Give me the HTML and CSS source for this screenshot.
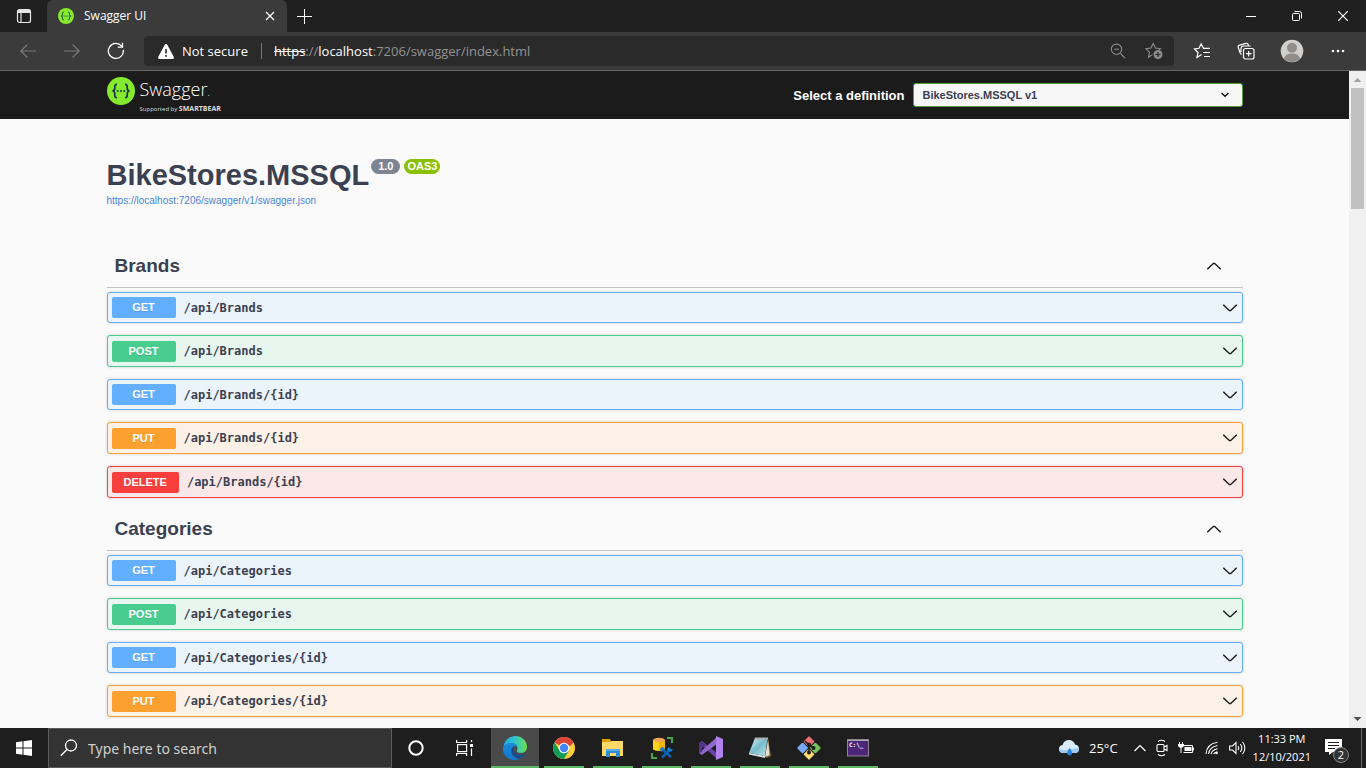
FILE: index.html
```html
<!DOCTYPE html>
<html lang="en">
<head>
<meta charset="utf-8">
<title>Swagger UI</title>
<link rel="stylesheet" href="styles.css">
</head>
<body>
<svg class="defs" aria-hidden="true">
  <symbol id="down" viewBox="0 0 14 8"><path d="M.3 .8L6.300 6.400Q7 7 7.700 6.400L13.700 .8" fill="none" stroke="#1c1c1c" stroke-width="1.400"/></symbol>
  <symbol id="up" viewBox="0 0 14 8"><path d="M.3 7.200L6.300 1.600Q7 1 7.700 1.600L13.700 7.200" fill="none" stroke="#1c1c1c" stroke-width="1.400"/></symbol>
  <symbol id="swagger" viewBox="0 0 28 28">
    <circle cx="14" cy="14" r="14" fill="#85ea2d"/>
    <path d="M10 7.4C7.600 7.400 7.800 9 7.800 11C7.800 13 7.400 14 5.400 14C7.400 14 7.800 15 7.800 17C7.800 19.200 7.600 20.700 10 20.700M18 7.400C20.400 7.400 20.200 9 20.200 11C20.200 13 20.600 14 22.600 14C20.600 14 20.200 15 20.200 17C20.200 19.200 20.400 20.700 18 20.700" fill="none" stroke="#173647" stroke-width="1.700"/>
    <g fill="#173647"><circle cx="10.700" cy="14" r="1"/><circle cx="14" cy="14" r="1"/><circle cx="17.300" cy="14" r="1"/></g>
  </symbol>
</svg>

<header class="tabstrip">
  <button class="tab-actions" aria-label="Tab actions"><svg width="16" height="16" fill="none" stroke="#e6e6e6" stroke-width="1.2"><rect x="1.500" y="1.500" width="13" height="13" rx="2"/><path d="M1.500 4.500h13M5 4.500v10" /><path d="M2 3h12" stroke-width="2"/></svg></button>
  <div class="tab">
    <svg width="16" height="16"><use href="#swagger"/></svg>
    <span class="tab-title">Swagger UI</span>
    <button class="tab-close" aria-label="Close tab"><svg width="10" height="10" stroke="#fff" stroke-width="1.300"><path d="M1 1l8 8M9 1l-8 8"/></svg></button>
  </div>
  <button class="tab-new" aria-label="New tab"><svg width="15" height="15" stroke="#fff"><path d="M0 7.500h15M7.500 0v15"/></svg></button>
  <div class="window-buttons">
    <button aria-label="Minimize"><svg width="10" height="10" stroke="#fff"><path d="M0 5.500h10"/></svg></button>
    <button aria-label="Restore"><svg width="10" height="10" fill="none" stroke="#fff"><rect x=".5" y="2.500" width="7" height="7" rx="1"/><path d="M2.500 .5h5a2 2 0 0 1 2 2v5"/></svg></button>
    <button aria-label="Close"><svg width="10" height="10" stroke="#fff" stroke-width="1.200"><path d="M0 0l10 10M10 0L0 10"/></svg></button>
  </div>
</header>

<nav class="toolbar" aria-label="Browser">
  <button aria-label="Back"><svg width="16" height="14" fill="none" stroke="#7b7b7b" stroke-width="1.100"><path d="M16 7H.8M7.500 .5L.8 7l6.700 6.500"/></svg></button>
  <button aria-label="Forward"><svg width="16" height="14" fill="none" stroke="#7b7b7b" stroke-width="1.100"><path d="M0 7h15.200M8.500 .5L15.200 7l-6.700 6.500"/></svg></button>
  <button aria-label="Refresh"><svg width="18" height="18" fill="none" stroke="#fff" stroke-width="1.300"><path d="M16.300 7.800A7.500 7.500 0 1 1 14.700 4.200M15.500 .8v4.400h-4.700"/></svg></button>
  <div class="omnibox">
    <button class="security"><svg width="16" height="15"><path d="M8 0Q8.900 0 9.300 .8L15.800 13Q16.300 15 14.500 15H1.500Q-.3 15 .2 13L6.700 .8Q7.100 0 8 0Z" fill="#fff"/><path d="M8 5v4.500M8 11v1.800" stroke="#2a2a2a" stroke-width="1.600"/></svg><span>Not secure</span></button>
    <div class="address" role="textbox" aria-label="Address"><s>https</s>://<b>localhost</b>:7206/swagger/index.html</div>
    <button aria-label="Zoom"><svg width="16" height="16" fill="none" stroke="#8c8c8c" stroke-width="1.100"><circle cx="6.500" cy="6.300" r="5.200"/><path d="M4 6.300h5M10.300 10.300l4.700 4.700"/></svg></button>
    <button aria-label="Add to favorites"><svg width="18" height="18" fill="none" stroke="#8c8c8c" stroke-width="1.100"><path d="M7.500 12.600L3.500 15.200L4.500 10.300L1 6.700L5.900 6.100L8.200 1.500L10.400 6.100L15.500 6.700L13.500 8.700"/><circle cx="13" cy="12.500" r="4.500" fill="#8c8c8c" stroke="none"/><path d="M13 10v5M10.500 12.500h5" stroke="#2a2a2a" stroke-width="1.200"/></svg></button>
  </div>
  <button aria-label="Favorites"><svg width="18" height="18" fill="none" stroke="#fff" stroke-width="1.200"><path d="M8.500 12.500L4 15.500L5 10.500L1.500 6.900L6 6.300L8.200 1.800L10.400 6.300H17M10 10.500h7M11 14.500h6"/></svg></button>
  <button aria-label="Collections"><svg width="18" height="18" fill="none" stroke="#fff" stroke-width="1.200"><rect x="6.500" y="6.500" width="10.500" height="10.500" rx="2"/><path d="M11.700 9v5.500M9 11.700h5.500M4.500 12.500Q3.200 11.500 2.800 10L1.200 5.200Q.8 4 2 3.300L9 1.300Q10.500 1 11 2.300L11.500 4M4 10V7Q4 4 7 4H13.500"/></svg></button>
  <button class="profile" aria-label="Profile"><svg width="24" height="24"><circle cx="12" cy="12" r="11.300" fill="#d2d0ce"/><circle cx="12" cy="8.800" r="5" fill="#918d8a"/><path d="M4 19.800Q5 14.500 12 14.500T20 19.800Q12 26.500 4 19.800Z" fill="#918d8a"/></svg></button>
  <button aria-label="Settings and more"><svg width="14" height="4" fill="#fff"><circle cx="2" cy="2" r="1.300"/><circle cx="7" cy="2" r="1.300"/><circle cx="12" cy="2" r="1.300"/></svg></button>
</nav>

<div class="viewport">
  <main class="page">
    <div class="topbar">
      <div class="wrapper topbar-row">
        <a class="logo" href="#">
          <svg width="28" height="28"><use href="#swagger"/></svg>
          <span class="logo-words"><span class="logo-name">Swagger<small>.</small></span><span class="logo-by">Supported by <strong>SMARTBEAR</strong></span></span>
        </a>
        <label class="select-label" for="definition">Select a definition</label>
        <div class="select-box">
          <select id="definition"><option>BikeStores.MSSQL v1</option></select>
          <svg width="10" height="6" fill="none" stroke="#111" stroke-width="1.500"><path d="M1.500 1l3.500 3.200l3.500-3.200"/></svg>
        </div>
      </div>
    </div>
    <div class="wrapper">
      <section class="info">
        <div class="title-row"><h1>BikeStores.MSSQL</h1><span class="badge">1.0</span><span class="badge oas">OAS3</span></div>
        <a class="spec" href="#">https://localhost:7206/swagger/v1/swagger.json</a>
      </section>
      <section class="group">
        <button class="group-head"><span>Brands</span><svg width="14" height="8"><use href="#up"/></svg></button>
        <button class="op get"><span class="verb">GET</span><span class="path">/api/Brands</span><svg width="14" height="8"><use href="#down"/></svg></button>
        <button class="op post"><span class="verb">POST</span><span class="path">/api/Brands</span><svg width="14" height="8"><use href="#down"/></svg></button>
        <button class="op get"><span class="verb">GET</span><span class="path">/api/Brands/{id}</span><svg width="14" height="8"><use href="#down"/></svg></button>
        <button class="op put"><span class="verb">PUT</span><span class="path">/api/Brands/{id}</span><svg width="14" height="8"><use href="#down"/></svg></button>
        <button class="op delete"><span class="verb">DELETE</span><span class="path">/api/Brands/{id}</span><svg width="14" height="8"><use href="#down"/></svg></button>
      </section>
      <section class="group">
        <button class="group-head"><span>Categories</span><svg width="14" height="8"><use href="#up"/></svg></button>
        <button class="op get"><span class="verb">GET</span><span class="path">/api/Categories</span><svg width="14" height="8"><use href="#down"/></svg></button>
        <button class="op post"><span class="verb">POST</span><span class="path">/api/Categories</span><svg width="14" height="8"><use href="#down"/></svg></button>
        <button class="op get"><span class="verb">GET</span><span class="path">/api/Categories/{id}</span><svg width="14" height="8"><use href="#down"/></svg></button>
        <button class="op put"><span class="verb">PUT</span><span class="path">/api/Categories/{id}</span><svg width="14" height="8"><use href="#down"/></svg></button>
      </section>
    </div>
  </main>
  <div class="scrollbar" aria-hidden="true">
    <svg width="17" height="17"><path d="M4.500 11L8.500 7l4 4z" fill="#a3a3a3"/></svg>
    <div class="thumb"></div>
    <svg class="scroll-end" width="17" height="17"><path d="M4.500 6L8.500 10l4-4z" fill="#505050"/></svg>
  </div>
</div>

<footer class="taskbar">
  <button aria-label="Start"><svg width="16" height="16" fill="#fff"><path d="M0 2.200L6.500 1.300V7.500H0zM7.500 1.200L16 0V7.500H7.500zM0 8.500H6.500V14.700L0 13.800zM7.500 8.500H16V16L7.500 14.800z"/></svg></button>
  <label class="search"><svg width="18" height="18" fill="none" stroke="#fff" stroke-width="1.300"><circle cx="11" cy="6.500" r="5.500"/><path d="M7 10.500L.8 16.700"/></svg><input type="text" placeholder="Type here to search" aria-label="Search"></label>
  <button aria-label="Cortana"><svg width="16" height="16"><circle cx="8" cy="8" r="6.700" fill="none" stroke="#fff" stroke-width="2"/></svg></button>
  <button aria-label="Task view"><svg width="17" height="16" fill="none" stroke="#fff" stroke-width="1.200"><path d="M.6 0v2.500h10V0M.6 16v-2.500h10V16M15.500 0v2M15.500 8.500V16"/><rect x="1.600" y="4.600" width="9" height="7"/><path d="M14 4h3v3h-3z" fill="#fff" stroke="none"/></svg></button>
  <div class="apps">
    <button class="app active" aria-label="Edge"><svg width="24" height="24">
      <defs><linearGradient id="e1"><stop stop-color="#25a8e8"/><stop offset=".5" stop-color="#31c7c9"/><stop offset="1" stop-color="#6be04b"/></linearGradient><linearGradient id="e2" x2="0" y2="1"><stop stop-color="#1989d8"/><stop offset="1" stop-color="#1278d4"/></linearGradient></defs>
      <path d="M.3 10.500C1.500 4 6.500 0 12.200 0C19 0 24 5 24 10.800C24 14.500 21.500 17 18 17C15 17 13.500 16 13.800 14.700C15.500 12.500 14.500 7.300 8.500 7.300C4.500 7.300 1.500 9 .3 10.500Z" fill="url(#e1)"/>
      <path d="M.1 11.500C1 8.600 4.500 6.900 8.300 6.900C12 6.900 14.600 9.200 14.700 12C14 10.500 12 9.800 10.300 10.700C7 12.500 7.500 19 12 21.500C14 22.600 16 23 17 22.700C9 26.500 -1 21 .1 11.500Z" fill="url(#e2)"/>
      <path d="M9.600 11.200C7 16 10 22 16.500 22.200C19.500 21.800 21.700 19.500 22.500 18C19 19.700 14.500 19.500 12 16.500C10.500 14.800 9.700 13 9.600 11.200Z" fill="#0c4c97"/>
    </svg></button>
    <button class="app" aria-label="Chrome"><svg width="24" height="24"><circle cx="12" cy="12" r="11" fill="#ffcd40"/><path d="M2.500 6.500A11 11 0 0 1 21.500 6.500L12 12Z" fill="#db4437"/><path d="M12 6.500h9.600L18 10z" fill="#db4437"/><path d="M2.500 6.500A11 11 0 0 0 12 23L16.800 14.700L8 15Z" fill="#0f9d58"/><circle cx="12" cy="12" r="5.300" fill="#fff"/><circle cx="12" cy="12" r="4.200" fill="#4285f4"/></svg></button>
    <button class="app" aria-label="File Explorer"><svg width="24" height="20"><path d="M1 1h8l1 2h12v4H1z" fill="#e2a000"/><path d="M1 4h9l1-1h11v15H1z" fill="#ffd968"/><path d="M5 11h14v8h-4v-4H9v4H5z" fill="#2e8bd8"/><path d="M5 11h14v2H5z" fill="#58aceb"/></svg></button>
    <button class="app" aria-label="SQL Server Management Studio"><svg width="24" height="24"><path d="M3 4v9.500q6 3 12 0V4z" fill="#ffd21c"/><path d="M9 4v11q4 0 6-1.500V4z" fill="#f3b600"/><ellipse cx="9" cy="4" rx="6" ry="2.200" fill="#f2a65a"/><path d="M17 2h5v5M2 17v5h5" fill="none" stroke="#4ba049" stroke-width="2.200"/><path d="M12 21.500l8-8M11 12l10 9" stroke="#0b63b5" stroke-width="2.500"/><path d="M10 13l3-2 2 2-4 3zM18 11l-1 3 3 2 3-2" fill="#1681d8"/></svg></button>
    <button class="app" aria-label="Visual Studio"><svg width="24" height="24"><path d="M0 7l3-2 15 12v6L3 9.500v6L0 17z" fill="#6843a5"/><path d="M0 17l2.800 2L18 8V1z" fill="#9068cb"/><path d="M0 7l2.800-2L7 9 3 12v4L0 17z" fill="#52348a"/><path d="M17 0l7 3v18l-7 3z" fill="#b082ed"/></svg></button>
    <button class="app" aria-label="Notepad"><svg width="24" height="24"><defs><linearGradient id="n" x2="1" y2="1"><stop stop-color="#e5f5f8"/><stop offset=".5" stop-color="#75bccb"/><stop offset="1" stop-color="#c4e8ed"/></linearGradient></defs><path d="M20 2l3 18-5 2z" fill="#8a6c3a"/><path d="M20 4l1.500 15L17 21z" fill="#e5dfce"/><path d="M7 2h12.500L17 20 1 17z" fill="url(#n)"/><path d="M7 1.500h13v2H6.500z" fill="#a9aeb0"/><path d="M1 17l16 3v2L1 18.500z" fill="#dce3e5"/></svg></button>
    <button class="app" aria-label="Git"><svg width="24" height="24"><g transform="rotate(45 12 12)"><rect x="3.500" y="3.500" width="8" height="8" rx="1" fill="#f06f74"/><rect x="12.500" y="3.500" width="8" height="8" rx="1" fill="#75c35b"/><rect x="3.500" y="12.500" width="8" height="8" rx="1" fill="#79a9f5"/><rect x="12.500" y="12.500" width="8" height="8" rx="1" fill="#ffdb74"/></g><path d="M8 5l4 4v8M12 9l5 3" fill="none" stroke="#1e1e1e" stroke-width="1.500"/><g fill="#1e1e1e"><circle cx="12" cy="8.500" r="2"/><circle cx="16.500" cy="12" r="2"/><circle cx="12" cy="16.500" r="2"/></g></svg></button>
    <button class="app" aria-label="Command prompt"><svg width="22" height="18"><rect x=".5" y=".5" width="21" height="16.500" fill="#4e2679" stroke="#8d8791"/><path d="M1 1.500h20" stroke="#aaa5ad"/><text x="2" y="8" class="prompt">C:\_</text></svg></button>
  </div>
  <div class="tray">
    <button class="weather"><svg width="22" height="18"><path d="M5.500 14Q1 14 1 10Q1 6.500 4.500 6Q6 1 11 1Q15.500 1 17 5.500Q21 6 21 10Q21 14 17 14Z" fill="#d8ecfb"/><path d="M5.500 14Q1 14 1 10Q5 12 11 10.500L21 9Q21 14 17 14Z" fill="#9bc9f1"/><path d="M11.500 9q3 4 2.500 5.500a2.600 2.600 0 0 1-5 0Q9 13 11.500 9z" fill="#2683dc"/></svg><span>25°C</span></button>
    <button aria-label="Show hidden icons"><svg width="12" height="8" fill="none" stroke="#fff" stroke-width="1.200"><path d="M.5 7L6 1.500L11.500 7"/></svg></button>
    <button aria-label="Meet now"><svg width="12" height="18" fill="none" stroke="#fff" stroke-width="1.100"><rect x="1" y="5.500" width="7" height="7" rx="1"/><path d="M8 8l3-1.500v5L8 10M2 2.500Q5.500 0 9 2.500M2 15.500Q5.500 18 9 15.500"/></svg></button>
    <button aria-label="Battery"><svg width="17" height="14" fill="none" stroke="#fff"><path d="M5 4.500h9.500v7H5.500M15.500 6.500v3M1.500 1v3M4.500 1v3M3 7v5"/><path d="M0 3h6v2q-3 4-6 0zM6.500 6h7v4h-7z" fill="#fff" stroke="none"/></svg></button>
    <button aria-label="Network"><svg width="14" height="14" fill="none" stroke="#fff" stroke-width="1.100"><path d="M1 13Q1.500 3 12.500 1.200M3.500 13Q4.500 6 12.500 4.500M6 13Q7 9 12.500 7.800M8.500 13Q9.500 11.300 12.500 10.800"/><circle cx="11.500" cy="12" r="1.300" fill="#fff" stroke="none"/></svg></button>
    <button aria-label="Volume"><svg width="17" height="14" fill="none" stroke="#fff" stroke-width="1.100"><path d="M.6 5h2.900L7 1.500v11L3.500 9H.6zM9 5q1.500 2 0 4M11.300 3q3 4 0 8M13.600 1q4.500 6 0 12"/></svg></button>
    <button class="clock"><span>11:33 PM</span><span>12/10/2021</span></button>
    <button class="notices" aria-label="Notifications"><svg width="17" height="16"><path d="M0 0h17v13H8l-4 3v-3H0z" fill="#fff"/><path d="M3 3.500h11M3 6.500h11M3 9.500h7" stroke="#1e1e1e"/></svg><span class="count">2</span></button>
  </div>
</footer>
</body>
</html>
```
FILE: styles.css
```css
* { box-sizing: border-box; }
body {
  margin: 0;
  height: 100vh;
  display: flex;
  flex-direction: column;
  overflow: hidden;
  background: #fafafa;
  font-family: "Open Sans", "Noto Sans", sans-serif;
}
button {
  margin: 0;
  padding: 0;
  border: 0;
  background: none;
  color: inherit;
  font: inherit;
  display: flex;
  align-items: center;
  justify-content: center;
}
svg { flex: none; display: block; }
.defs { position: absolute; width: 0; height: 0; }

.tabstrip { flex: none; height: 32px; display: flex; background: #202020; color: #fff; }
.tab-actions { width: 47px; }
.tab { width: 240px; display: flex; align-items: center; padding: 0 12px 0 11px; background: #3b3b3b; border-radius: 6px 6px 0 0; }
.tab-title { flex: 1; margin-left: 10px; font-size: 12px; line-height: 16px; }
.tab-new { width: 35px; }
.window-buttons { display: flex; margin-left: auto; }
.window-buttons button { width: 46px; }

.toolbar { flex: none; height: 39px; display: flex; align-items: stretch; padding: 0 6px; background: #3b3b3b; border-bottom: 1px solid #666; }
.toolbar > button { width: 44px; }
.toolbar > .profile { width: 48px; }
.omnibox { flex: 1; margin: 4px 6px; padding: 0 2px 0 14px; display: flex; align-items: center; background: #2a2a2a; border-radius: 4px; color: #939393; font-size: 13px; }
.omnibox button { width: 36px; }
.omnibox .security { width: auto; gap: 8px; padding-right: 13px; border-right: 1px solid #777; color: #fff; line-height: 16px; }
.address { flex: 1; padding-left: 12px; }
.address s, .address b { color: #fff; font-weight: 400; }

.viewport { flex: 1; min-height: 0; display: flex; }
.page { flex: 1; overflow: hidden; background: #fafafa; color: #3b4151; font-family: "Liberation Sans", Arial, sans-serif; }
.wrapper { max-width: 1168px; margin: 0 auto; padding: 0 16px; }
.topbar { background: #1b1b1b; }
.topbar-row { height: 48px; display: flex; align-items: center; }
.logo { flex: 1; display: flex; gap: 5px; color: #fff; text-decoration: none; font-family: "Open Sans", sans-serif; }
.logo-words { display: flex; flex-direction: column; }
.logo-name { font-size: 18px; line-height: 25px; font-weight: 300; }
.logo-name small { font-size: 10px; }
.logo-by { font-size: 6px; line-height: 7px; color: #ddd; }
.logo-by strong { font-size: 7px; }
.select-label { color: #fff; font-size: 13px; font-weight: 700; }
.select-box { display: grid; align-items: center; width: 330px; margin-left: 8px; }
.select-box > * { grid-area: 1 / 1; }
.select-box svg { justify-self: end; margin-right: 13px; pointer-events: none; }
select { appearance: none; width: 100%; height: 24px; padding: 0 9px; border: 1px solid #549a35; border-radius: 3px; background: #f7f7f7; color: #3b4151; font: 700 11px "Liberation Sans", Arial, sans-serif; }

.info { padding: 39px 0 40px; }
.title-row { display: flex; align-items: flex-start; gap: 4px; }
h1 { margin: 0 -2px 0 0; font-size: 29px; line-height: 35px; font-weight: 700; }
.badge { margin-top: 1px; padding: 0 7px; border-radius: 8px; background: #7d8492; color: #fff; font-size: 11px; line-height: 15px; font-weight: 700; }
.badge.oas { padding: 0 3px; background: #89bf04; }
.spec { display: block; color: #4a86dc; font-size: 10px; line-height: 15px; text-decoration: none; }

.group + .group { margin-top: 13px; }
.group-head { width: 100%; justify-content: space-between; padding: 6px 22px 9px 8px; margin-bottom: 4px; border-bottom: 1px solid #c0c2c5; font-size: 19px; line-height: 24px; font-weight: 700; }
.op { width: 100%; height: 32px; margin-bottom: 12px; padding: 0 5px 0 4px; justify-content: flex-start; border: 1px solid; border-radius: 3px; box-shadow: 0 0 3px rgba(0, 0, 0, .19); }
.op:last-child { margin-bottom: 0; }
.verb { min-width: 64px; padding: 0 12px; border-radius: 2px; color: #fff; font-size: 11px; line-height: 21px; font-weight: 700; text-align: center; text-shadow: 0 1px 0 rgba(0, 0, 0, .1); }
.path { flex: 1; padding-left: 8px; color: #3b4151; font: 700 12px "DejaVu Sans Mono", monospace; text-align: left; }
.get { height: 31px; background: #ebf3fb; border-color: #61affe; }
.get .verb { background: #61affe; }
.post { background: #e8f6f0; border-color: #49cc90; }
.post .verb { background: #49cc90; }
.put { background: #fbf1e6; border-color: #fca130; }
.put .verb { background: #fca130; }
.delete { background: #fae7e7; border-color: #f93e3e; }
.delete .verb { background: #f93e3e; }

.scrollbar { flex: none; width: 17px; display: flex; flex-direction: column; background: #f0f0f0; }
.thumb { height: 121px; margin: 0 2px; background: #c1c1c1; }
.scroll-end { margin-top: auto; }

.taskbar { flex: none; height: 40px; display: flex; background: #1e1e1e; color: #fff; }
.taskbar > button { width: 48px; }
.search { width: 344px; display: flex; align-items: center; gap: 10px; padding-left: 11px; background: #333; border: 1px solid #5c5c5c; }
.search input { flex: 1; min-width: 0; padding: 0; border: 0; outline: 0; background: none; color: #fff; font: 14px "Noto Sans", sans-serif; }
.search input::placeholder { color: #d0d0d0; }
.apps { display: flex; gap: 1px; margin-left: 3px; }
.app { width: 48px; background: linear-gradient(#5cb85f, #5cb85f) bottom / 40px 2px no-repeat; }
.app.active { background: linear-gradient(#5cb85f, #5cb85f) bottom / 48px 2px no-repeat #4a4a4a; }
.prompt { fill: #fff; font: 700 6px "DejaVu Sans Mono", monospace; }
.tray { display: flex; gap: 10px; margin-left: auto; margin-right: 4px; padding-right: 12px; border-right: 1px solid #666; }
.weather { gap: 9px; margin-right: 6px; font-size: 13px; }
.clock { flex-direction: column; margin-left: -3px; font-size: 11px; line-height: 18px; }
.notices { position: relative; width: 24px; margin-left: 4px; padding-bottom: 2px; justify-content: flex-start; }
.count { position: absolute; right: 0; bottom: 5px; width: 16px; height: 16px; border: 1px solid #888; border-radius: 50%; background: #333; font-size: 11px; line-height: 14px; }
```
